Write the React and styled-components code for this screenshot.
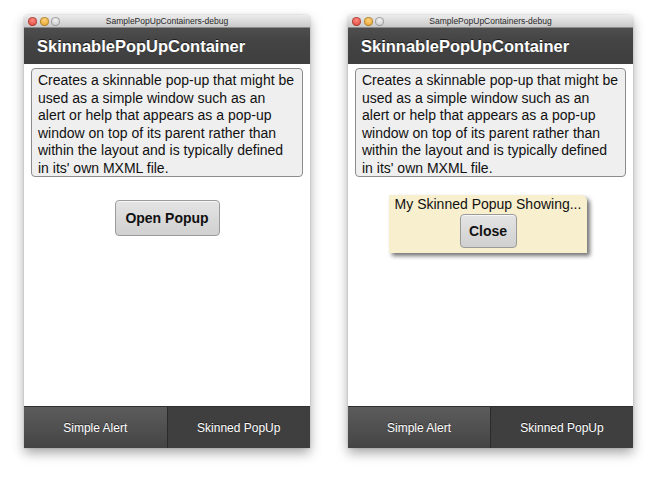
import React from "react";
import styled, { createGlobalStyle } from "styled-components";

const GlobalStyle = createGlobalStyle`
  html, body {
    margin: 0;
    padding: 0;
    background: #ffffff;
  }
  body {
    font-family: "Liberation Sans", Arial, sans-serif;
  }
`;

const Page = styled.div`
  width: 648px;
  height: 481px;
  display: flex;
  align-items: flex-start;
  gap: 38px;
  padding: 15px 0 0 24px;
  box-sizing: border-box;
`;

const Window = styled.div`
  width: ${(p) => p.$width}px;
  height: 433px;
  display: flex;
  flex-direction: column;
  box-shadow: 0 5px 12px rgba(0, 0, 0, 0.35), 0 0 2px rgba(0, 0, 0, 0.2);
  border-radius: 4px 4px 0 0;
  overflow: hidden;
`;

const TitleBar = styled.div`
  height: 12px;
  flex: none;
  position: relative;
  display: flex;
  align-items: center;
  justify-content: center;
  background: linear-gradient(#ececec, #c9c9c9);
  border-bottom: 1px solid #8a8a8a;
`;

const Lights = styled.div`
  position: absolute;
  left: 4px;
  top: 1.5px;
  display: flex;
  gap: 2.5px;
`;

const Light = styled.span`
  width: 9px;
  height: 9px;
  border-radius: 50%;
  background: ${(p) => p.$color};
  box-shadow: inset 0 0 0 1px rgba(0, 0, 0, 0.25);
`;

const WindowTitle = styled.span`
  font-size: 8.5px;
  color: #2a2a2a;
`;

const Header = styled.div`
  height: 36px;
  flex: none;
  display: flex;
  align-items: center;
  padding-left: 13px;
  background: linear-gradient(#4e4e4e, #434343 40%, #3f3f3f);
  color: #ffffff;
  font-size: 16.5px;
  font-weight: bold;
  text-shadow: 0 -1px 0 rgba(0, 0, 0, 0.6);
`;

const Content = styled.div`
  flex: 1;
  position: relative;
  background: #ffffff;
  padding: 4px 7px 0 7px;
  display: flex;
  flex-direction: column;
  align-items: center;
`;

const Description = styled.div`
  align-self: stretch;
  box-sizing: border-box;
  height: 109px;
  padding: 3px 6px;
  background: #efefef;
  border: 1px solid #8c8c8c;
  border-radius: 4px;
  font-size: 14px;
  line-height: 17.5px;
  color: #111111;
`;

const Button = styled.button`
  margin-top: ${(p) => p.$top || 0}px;
  width: ${(p) => p.$w}px;
  height: ${(p) => p.$h}px;
  border: 1px solid #9a9a9a;
  border-radius: 4px;
  background: linear-gradient(#e4e4e4, #d0d0d0);
  box-shadow: inset 0 1px 0 rgba(255, 255, 255, 0.7);
  font-family: "Liberation Sans", Arial, sans-serif;
  font-size: 14px;
  font-weight: bold;
  color: #111111;
  padding: 0;
`;

const Popup = styled.div`
  position: absolute;
  left: 41px;
  top: 131px;
  width: 198px;
  height: 58px;
  box-sizing: border-box;
  background: #f7efcd;
  border-radius: 0 6px 0 0;
  box-shadow: 3px 3px 4px rgba(0, 0, 0, 0.55);
  display: flex;
  flex-direction: column;
  align-items: center;
  padding-top: 1px;
`;

const PopupText = styled.div`
  font-size: 14px;
  color: #111111;
  line-height: 16px;
  margin-bottom: 2px;
`;

const TabBar = styled.div`
  height: 41px;
  flex: none;
  display: flex;
  border-top: 1px solid #2f2f2f;
`;

const Tab = styled.div`
  flex: 1;
  display: flex;
  align-items: center;
  justify-content: center;
  color: #ffffff;
  font-size: 12px;
  text-shadow: 0 -1px 0 rgba(0, 0, 0, 0.5);
  background: ${(p) =>
    p.$selected ? "linear-gradient(#5c5c5c, #444444)" : "#3f3f3f"};
  & + & {
    border-left: 1px solid #2a2a2a;
  }
`;

const DESC =
  "Creates a skinnable pop-up that might be used as a simple window such as an alert or help that appears as a pop-up window on top of its parent rather than within the layout and is typically defined in its' own MXML file.";

const AppWindow = ({ width, children }) => (
  <Window $width={width}>
    <TitleBar>
      <Lights>
        <Light $color="radial-gradient(circle at 50% 35%, #ff8a80, #d8382c)" />
        <Light $color="radial-gradient(circle at 50% 35%, #ffd27a, #e39a1c)" />
        <Light $color="radial-gradient(circle at 50% 35%, #f2f2f2, #bdbdbd)" />
      </Lights>
      <WindowTitle>SamplePopUpContainers-debug</WindowTitle>
    </TitleBar>
    <Header>SkinnablePopUpContainer</Header>
    <Content>
      <Description>{DESC}</Description>
      {children}
    </Content>
    <TabBar>
      <Tab $selected>Simple Alert</Tab>
      <Tab>Skinned PopUp</Tab>
    </TabBar>
  </Window>
);

export default function App() {
  return (
    <>
      <GlobalStyle />
      <Page>
        <AppWindow width={286}>
          <Button $top={23} $w={105} $h={36}>
            Open Popup
          </Button>
        </AppWindow>
        <AppWindow width={285}>
          <Popup>
            <PopupText>My Skinned Popup Showing...</PopupText>
            <Button $w={57} $h={34}>
              Close
            </Button>
          </Popup>
        </AppWindow>
      </Page>
    </>
  );
}
